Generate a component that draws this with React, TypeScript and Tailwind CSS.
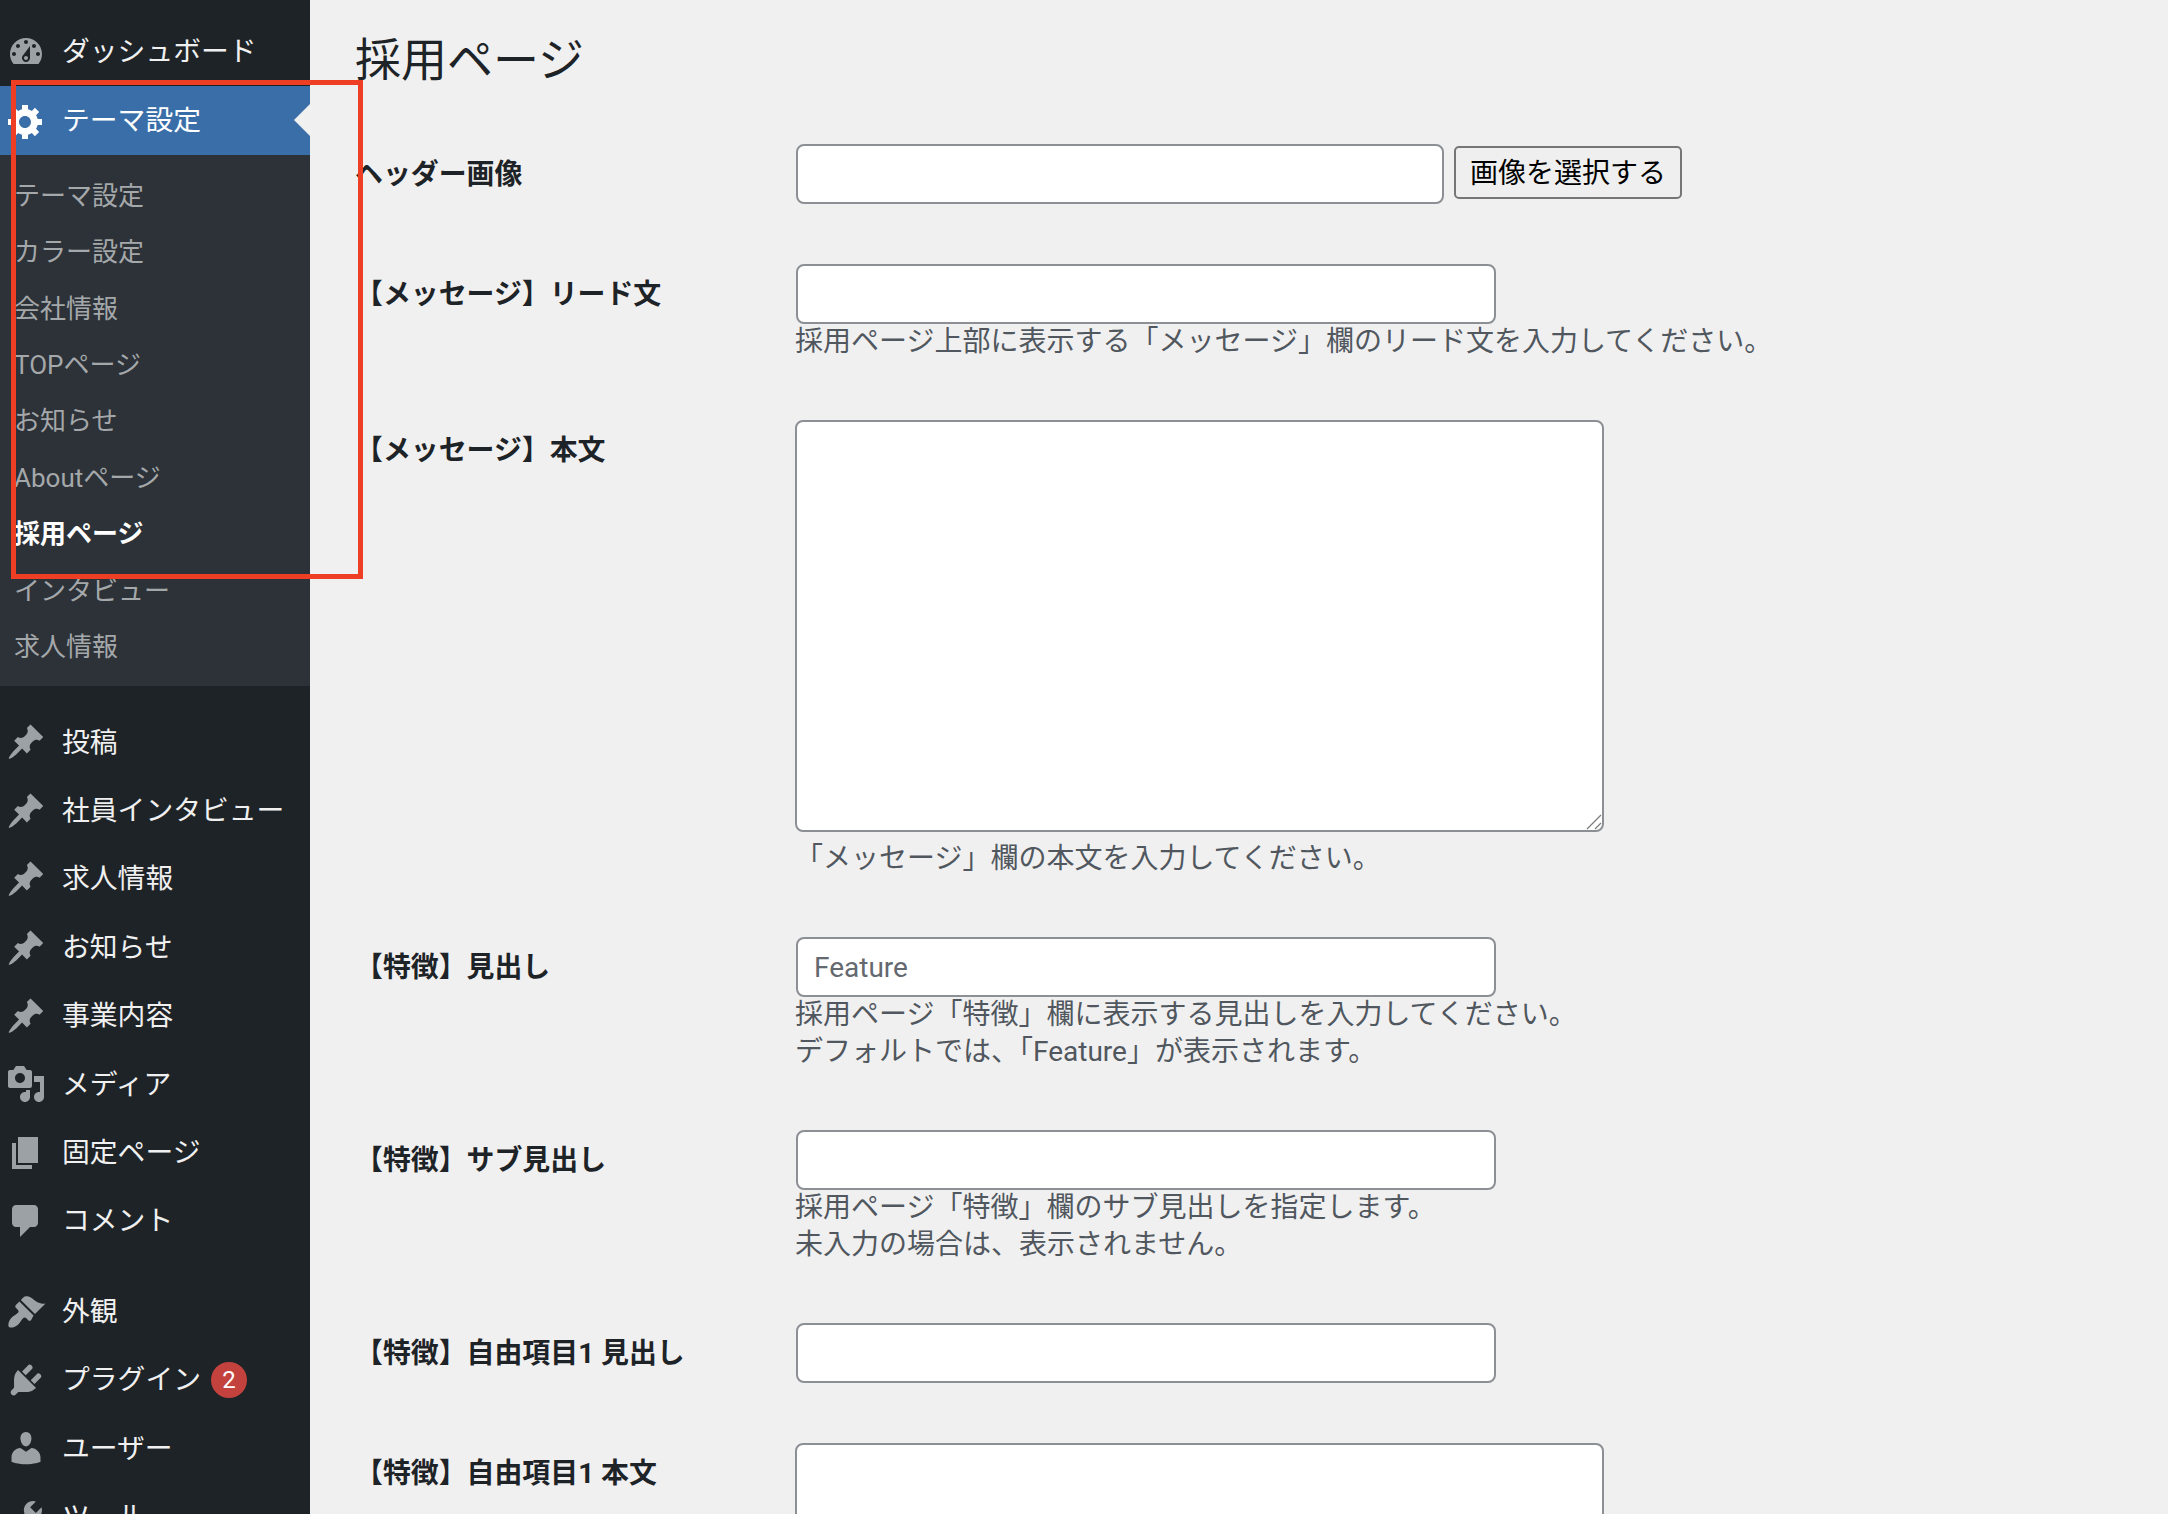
import type { ReactNode } from 'react';

const icons: Record<string, string> = {
  dashboard:
    'M3.76 16h12.48c1.1-1.37 1.76-3.11 1.76-5 0-4.42-3.58-8-8-8s-8 3.58-8 8c0 1.89.66 3.63 1.76 5zM10 4c.55 0 1 .45 1 1s-.45 1-1 1-1-.45-1-1 .45-1 1-1zM6 6c.55 0 1 .45 1 1s-.45 1-1 1-1-.45-1-1 .45-1 1-1zm8 0c.55 0 1 .45 1 1s-.45 1-1 1-1-.45-1-1 .45-1 1-1zm-5.37 5.55L12 7v6c0 1.1-.9 2-2 2s-2-.9-2-2c0-.57.24-1.08.63-1.45zM4 10c.55 0 1 .45 1 1s-.45 1-1 1-1-.45-1-1 .45-1 1-1zm12 0c.55 0 1 .45 1 1s-.45 1-1 1-1-.45-1-1 .45-1 1-1zm-5 3c0-.55-.45-1-1-1s-1 .45-1 1 .45 1 1 1 1-.45 1-1z',
  gear: 'M18 12h-2.18c-.17.7-.44 1.35-.81 1.93l1.54 1.54-2.1 2.1-1.54-1.54c-.58.36-1.23.63-1.91.79V19H8v-2.18c-.68-.16-1.33-.43-1.91-.79l-1.54 1.54-2.12-2.12 1.54-1.54c-.36-.58-.63-1.23-.79-1.91H1V9.03h2.17c.16-.7.44-1.35.8-1.94L2.43 5.55l2.1-2.1 1.54 1.54c.58-.37 1.24-.64 1.93-.81V2h3v2.18c.68.16 1.33.43 1.91.79l1.54-1.54 2.12 2.12-1.54 1.54c.36.59.64 1.24.8 1.94H18V12zm-8.5 1.5c1.66 0 3-1.34 3-3s-1.34-3-3-3-3 1.34-3 3 1.34 3 3 3z',
  pin: 'M10.44 3.02l1.82-1.82 6.36 6.35-1.83 1.82c-1.05-.68-2.48-.57-3.41.36l-.75.75c-.92.93-1.04 2.35-.35 3.41l-1.83 1.82-2.41-2.41-2.8 2.79c-.42.42-3.38 2.71-3.8 2.29s1.86-3.39 2.28-3.81l2.79-2.79L4.1 9.36l1.83-1.82c1.05.69 2.48.57 3.4-.36l.75-.75c.93-.92 1.05-2.35.36-3.41z',
  media:
    'M13 11V4c0-.55-.45-1-1-1h-1.67L9 1H5L3.67 3H2c-.55 0-1 .45-1 1v7c0 .55.45 1 1 1h10c.55 0 1-.45 1-1zM7 4.5c1.38 0 2.5 1.12 2.5 2.5S8.38 9.5 7 9.5 4.5 8.38 4.5 7 5.62 4.5 7 4.5zM14 6h5v10.5c0 1.38-1.12 2.5-2.5 2.5S14 17.88 14 16.5s1.12-2.5 2.5-2.5c.17 0 .34.02.5.05V9h-3V6zm-4 8.05V13h2v3.5c0 1.38-1.12 2.5-2.5 2.5S7 17.88 7 16.5 8.12 14 9.5 14c.17 0 .34.02.5.05z',
  page: 'M6 15V2h10v13H6zm-1 1h8v2H3V5h2v11z',
  comment: 'M5 2h9c1.1 0 2 .9 2 2v7c0 1.1-.9 2-2 2h-2l-5 5v-5H5c-1.1 0-2-.9-2-2V4c0-1.1.9-2 2-2z',
  brush:
    'M14.48 11.06L7.41 3.99l1.5-1.5c.5-.56 2.3-.47 3.51.32 1.21.8 1.43 1.28 2.91 2.1 1.18.64 2.45 1.26 4.45.85zm-.71.71L6.7 4.7 4.93 6.47c-.39.39-.39 1.02 0 1.41l1.06 1.06c.39.39.39 1.03 0 1.42-.6.6-1.43 1.11-2.21 1.69-.35.26-.7.53-1.01.84-1.34 1.34-1.99 3.71-1.27 4.61.91.72 3.27.07 4.61-1.27.31-.31.58-.66.84-1.01.58-.78 1.09-1.61 1.69-2.21.39-.39 1.02-.39 1.41 0l1.06 1.06c.39.39 1.02.39 1.41 0z',
  plug: 'M13.11 4.36L9.87 7.6 8 5.73l3.24-3.24c.35-.34 1.05-.2 1.56.32.52.51.66 1.21.31 1.55zm-8 1.77l.91-1.12 9.01 9.01-1.19.84c-.71.71-2.63 1.16-3.82 1.16H6.14L4.9 17.26c-.59.59-1.54.59-2.12 0-.59-.58-.59-1.53 0-2.12l1.24-1.24v-3.88c0-1.13.4-3.19 1.09-3.89zm7.26 3.97l3.24-3.24c.34-.35 1.04-.21 1.55.31.52.51.66 1.21.31 1.55l-3.24 3.25z',
  user: 'M10 9.25c-2.27 0-2.73-3.44-2.73-3.44C7 4.02 7.82 2 9.97 2c2.16 0 2.98 2.02 2.71 3.81 0 0-.41 3.44-2.68 3.44zm0 2.57L12.72 10c2.39 0 4.52 2.33 4.52 4.53v2.49s-3.65 1.13-7.24 1.13c-3.65 0-7.24-1.13-7.24-1.13v-2.49c0-2.25 1.94-4.48 4.47-4.48z',
  tool: 'M16.68 9.77c-1.34 1.34-3.3 1.67-4.95.99l-5.41 6.52c-.99.99-2.59.99-3.58 0s-.99-2.59 0-3.57l6.52-5.42c-.68-1.65-.35-3.61.99-4.95 1.28-1.28 3.12-1.62 4.72-1.06l-2.89 2.89 2.82 2.82 2.86-2.87c.53 1.58.18 3.39-1.08 4.67zM4.66 15.66c-.39-.39-1.03-.39-1.42 0s-.39 1.03 0 1.42 1.03.39 1.42 0 .39-1.03 0-1.42z',
};

function MenuItem({ icon, label, active, children }: { icon: string; label: string; active?: boolean; children?: ReactNode }) {
  return (
    <div className={`relative flex h-[68.4px] items-center text-[27.8px] ${active ? 'bg-[#3a6ea9] text-white' : 'text-[#f0f0f1]'}`}>
      <svg viewBox="0 0 20 20" className={`ml-[6px] mr-[16px] h-10 w-10 shrink-0 ${active ? 'fill-white' : 'fill-[#9ca1a6]'}`}>
        <path fillRule="evenodd" d={icons[icon]} />
      </svg>
      <span>{label}</span>
      {children}
    </div>
  );
}

function Row({ label, children }: { label: string; children: ReactNode }) {
  return (
    <div className="flex">
      <div className="h-[60px] w-[441px] shrink-0 text-[27.9px] font-bold leading-[62px] text-[#1d2327]">{label}</div>
      <div>{children}</div>
    </div>
  );
}

function TextInput({ value, width = 'w-[700px]' }: { value?: string; width?: string }) {
  return (
    <input
      readOnly
      value={value ?? ''}
      className={`block h-[60px] rounded-lg border-2 border-[#8c8f94] bg-white px-4 text-[28px] text-[#646970] ${width}`}
    />
  );
}

function Desc({ children }: { children: ReactNode }) {
  return <p className="-ml-px text-[28px] leading-[36.5px] text-[#50575e]">{children}</p>;
}

const subItems = ['テーマ設定', 'カラー設定', '会社情報', 'TOPページ', 'お知らせ', 'Aboutページ', '採用ページ', 'インタビュー', '求人情報'];

export default function App() {
  return (
    <div className="relative flex h-[1514px] overflow-hidden bg-[#f0f0f0] font-['Roboto','Noto_Sans_CJK_JP',sans-serif]">
      {/* Admin menu */}
      <aside className="w-[310px] shrink-0 bg-[#1e2327] pt-[18px]">
        <MenuItem icon="dashboard" label="ダッシュボード" />
        <MenuItem icon="gear" label="テーマ設定" active>
          <div className="absolute right-0 top-[18px] border-y-[16px] border-r-[16px] border-y-transparent border-r-[#f0f0f0]" />
        </MenuItem>
        <ul className="bg-[#2c3238] pb-[11px] pl-[14px] pt-[13px] text-[26px] text-[#a5a8aa]">
          {subItems.map((item) => (
            <li key={item} className={`h-[56.4px] leading-[56.4px] ${item === '採用ページ' ? 'font-bold text-white' : ''}`}>
              {item}
            </li>
          ))}
        </ul>
        <div className="mt-[22px]">
          <MenuItem icon="pin" label="投稿" />
          <MenuItem icon="pin" label="社員インタビュー" />
          <MenuItem icon="pin" label="求人情報" />
          <MenuItem icon="pin" label="お知らせ" />
          <MenuItem icon="pin" label="事業内容" />
          <MenuItem icon="media" label="メディア" />
          <MenuItem icon="page" label="固定ページ" />
          <MenuItem icon="comment" label="コメント" />
        </div>
        <div className="mt-[22px]">
          <MenuItem icon="brush" label="外観" />
          <MenuItem icon="plug" label="プラグイン">
            <span className="ml-[10px] flex h-9 w-9 items-center justify-center rounded-full bg-[#c4423d] text-[24px] text-white">2</span>
          </MenuItem>
          <MenuItem icon="user" label="ユーザー" />
          <MenuItem icon="tool" label="ツール" />
        </div>
      </aside>

      {/* Settings page */}
      <main className="flex-1 pl-[45px]">
        <h1 className="pt-[2px] text-[46px] font-normal leading-[116px] text-[#1d2327]">採用ページ</h1>
        <div className="mt-[26px] flex flex-col gap-[60px]">
          <Row label="ヘッダー画像">
            <div className="flex items-start gap-[10px]">
              <TextInput width="w-[648px]" />
              <button className="mt-[2px] h-[53px] w-[228px] rounded-[5px] border-2 border-[#767676] bg-[#efefef] pt-[2px] text-[28px] text-black">画像を選択する</button>
            </div>
          </Row>
          <Row label="【メッセージ】リード文">
            <TextInput />
            <Desc>採用ページ上部に表示する「メッセージ」欄のリード文を入力してください。</Desc>
          </Row>
          <div className="-mt-px">
            <Row label="【メッセージ】本文">
              <div className="relative -ml-px w-[809px]">
                <textarea readOnly className="block h-[412px] w-full resize-none rounded-lg border-2 border-[#8c8f94] bg-white" />
                <svg viewBox="0 0 16 16" className="absolute bottom-[2px] right-[2px] h-4 w-4 stroke-[#7a7a7a]">
                  <path d="M1 15L15 1M9 15l6-6" strokeWidth="1.2" fill="none" />
                </svg>
              </div>
              <div className="mt-[9px]">
                <Desc>「メッセージ」欄の本文を入力してください。</Desc>
              </div>
            </Row>
          </div>
          <Row label="【特徴】見出し">
            <TextInput value="Feature" />
            <Desc>
              採用ページ「特徴」欄に表示する見出しを入力してください。
              <br />
              デフォルトでは、「Feature」が表示されます。
            </Desc>
          </Row>
          <Row label="【特徴】サブ見出し">
            <TextInput />
            <Desc>
              採用ページ「特徴」欄のサブ見出しを指定します。
              <br />
              未入力の場合は、表示されません。
            </Desc>
          </Row>
          <Row label="【特徴】自由項目1 見出し">
            <TextInput />
          </Row>
          <Row label="【特徴】自由項目1 本文">
            <textarea readOnly className="-ml-px block h-[411px] w-[809px] rounded-lg border-2 border-[#8c8f94] bg-white" />
          </Row>
        </div>
      </main>

      {/* Annotation frame drawn on top of the screenshot */}
      <div className="pointer-events-none absolute left-[11px] top-[80px] h-[499px] w-[352px] border-[5px] border-[#ee3f24]" />
    </div>
  );
}
